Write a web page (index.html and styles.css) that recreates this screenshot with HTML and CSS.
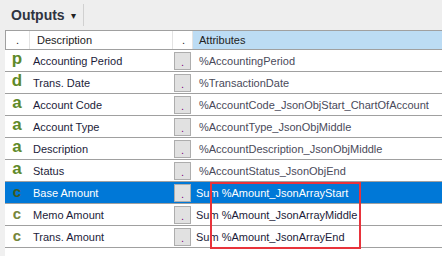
FILE: index.html
```html
<!DOCTYPE html>
<html lang="en">
<head>
    <meta charset="UTF-8">
    <title>Outputs</title>
    <link rel="stylesheet" href="styles.css">
</head>
<body>
    <div id="toolbar">
        <span class="toolbar-title">Outputs</span>
        <span class="toolbar-arrow">&#9662;</span>
        <span class="toolbar-sep"></span>
    </div>
    <div id="grid">
        <div class="row header">
            <div class="cell type">.</div>
            <div class="cell desc">Description</div>
            <div class="cell btn-col">.</div>
            <div class="cell attr">Attributes</div>
        </div>
        <div class="row">
            <div class="cell type">p</div>
            <div class="cell desc">Accounting Period</div>
            <div class="cell btn-col"><span class="dot-btn">.</span></div>
            <div class="cell attr">%AccountingPeriod</div>
        </div>
        <div class="row">
            <div class="cell type">d</div>
            <div class="cell desc">Trans. Date</div>
            <div class="cell btn-col"><span class="dot-btn">.</span></div>
            <div class="cell attr">%TransactionDate</div>
        </div>
        <div class="row">
            <div class="cell type">a</div>
            <div class="cell desc">Account Code</div>
            <div class="cell btn-col"><span class="dot-btn">.</span></div>
            <div class="cell attr">%AccountCode_JsonObjStart_ChartOfAccount</div>
        </div>
        <div class="row">
            <div class="cell type">a</div>
            <div class="cell desc">Account Type</div>
            <div class="cell btn-col"><span class="dot-btn">.</span></div>
            <div class="cell attr">%AccountType_JsonObjMiddle</div>
        </div>
        <div class="row">
            <div class="cell type">a</div>
            <div class="cell desc">Description</div>
            <div class="cell btn-col"><span class="dot-btn">.</span></div>
            <div class="cell attr">%AccountDescription_JsonObjMiddle</div>
        </div>
        <div class="row">
            <div class="cell type">a</div>
            <div class="cell desc">Status</div>
            <div class="cell btn-col"><span class="dot-btn">.</span></div>
            <div class="cell attr">%AccountStatus_JsonObjEnd</div>
        </div>
        <div class="row selected">
            <div class="cell type calc">c</div>
            <div class="cell desc">Base Amount</div>
            <div class="cell btn-col"><span class="dot-btn">.</span></div>
            <div class="cell attr sum">Sum %Amount_JsonArrayStart</div>
        </div>
        <div class="row">
            <div class="cell type calc">c</div>
            <div class="cell desc">Memo Amount</div>
            <div class="cell btn-col"><span class="dot-btn">.</span></div>
            <div class="cell attr sum">Sum %Amount_JsonArrayMiddle</div>
        </div>
        <div class="row">
            <div class="cell type calc">c</div>
            <div class="cell desc">Trans. Amount</div>
            <div class="cell btn-col"><span class="dot-btn">.</span></div>
            <div class="cell attr sum">Sum %Amount_JsonArrayEnd</div>
        </div>
        <div class="highlight-box"></div>
    </div>
</body>
</html>
```

FILE: styles.css
```css
body {
    margin: 0;
    font-family: "Liberation Sans", Arial, sans-serif;
    font-size: 11px;
    background-color: #f0f0f0;
    color: #1c1c3a;
    width: 442px;
    height: 256px;
    overflow: hidden;
}

#toolbar {
    height: 30px;
    background-color: #eeeeee;
    display: flex;
    align-items: center;
    padding-left: 11px;
    box-sizing: border-box;
}

.toolbar-title {
    font-weight: bold;
    font-size: 14px;
    color: #2e3340;
}

.toolbar-arrow {
    font-size: 10px;
    margin-left: 6px;
    color: #222;
}

.toolbar-sep {
    width: 1px;
    height: 22px;
    background: #d0d0d0;
    margin-left: 7px;
}

#grid {
    position: relative;
    margin-left: 5px;
    background: #fff;
    border-top: 1px solid #a0a0a0;
    height: 226px;
}

.row {
    display: grid;
    grid-template-columns: 24px 143px 20px 1fr;
    height: 21px;
    border-bottom: 1px solid #a0a0a0;
}

.cell {
    display: flex;
    align-items: center;
    white-space: nowrap;
    overflow: hidden;
}

.header {
    height: 18px;
    background: #fff;
}

.header .cell {
    border-left: 1px solid #e3e3e3;
    color: #222;
    font-weight: normal;
    font-size: 11px;
}

.header .type {
    border-left: 1px solid #a0a0a0;
    justify-content: center;
    padding-bottom: 0;
}

.header .btn-col {
    justify-content: center;
}

.header .attr {
    background: #bcdcf4;
    padding-left: 6px;
}

.header .desc {
    padding-left: 7px;
}

.type {
    justify-content: center;
    font-weight: bold;
    font-size: 17px;
    color: #5f8a2a;
    padding-bottom: 3px;
    box-sizing: border-box;
}

.type.calc {
    color: #76863a;
    font-size: 15px;
    padding-bottom: 2px;
}

.desc {
    padding-left: 4px;
}

.btn-col {
    padding-left: 2px;
}

.dot-btn {
    display: flex;
    align-items: flex-end;
    justify-content: center;
    width: 17px;
    height: 18px;
    background: #e1e1e1;
    border: 1px solid #adadad;
    box-sizing: border-box;
    color: #800080;
    font-size: 11px;
    line-height: 13px;
}

.attr {
    padding-left: 7px;
    color: #4a4a5a;
}

.attr.sum {
    padding-left: 4px;
    color: #1c1c3a;
}

.selected {
    background: #0078d7;
}

.selected .desc,
.selected .attr {
    color: #fff;
}

.selected .type.calc {
    color: #3f5a1e;
}

.highlight-box {
    position: absolute;
    left: 205px;
    top: 151px;
    width: 151px;
    height: 67px;
    border: 2px solid #e8333b;
    box-sizing: border-box;
}
```
